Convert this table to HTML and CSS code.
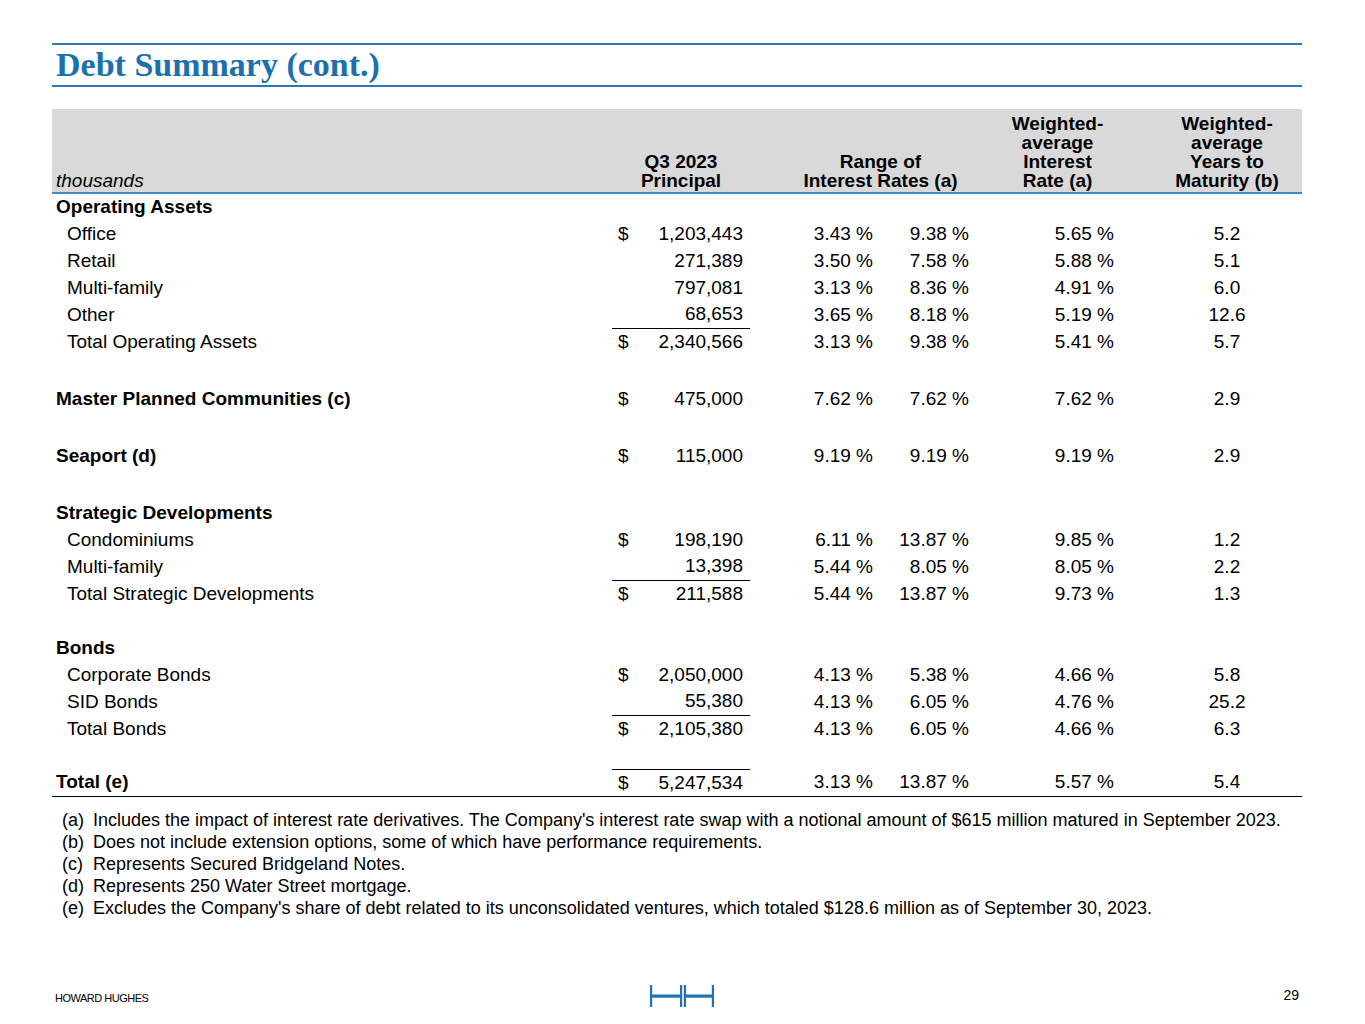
FILE: index.html
```html
<!DOCTYPE html>
<html>
<head>
<meta charset="utf-8">
<link rel="stylesheet" href="styles.css">
</head>
<body>
<div class="page">
  <header class="title-bar">
    <h1>Debt Summary (cont.)</h1>
  </header>

  <table class="debt">
    <colgroup>
      <col class="c-label"><col class="c-amt"><col class="c-r1"><col class="c-r2"><col class="c-wa"><col class="c-yr">
    </colgroup>
    <thead>
      <tr>
        <th class="h-label">thousands</th>
        <th class="h-amt">Q3 2023<br>Principal</th>
        <th class="h-range" colspan="2">Range of<br>Interest Rates (a)</th>
        <th class="h-wa">Weighted-<br>average<br>Interest<br>Rate (a)</th>
        <th class="h-yr">Weighted-<br>average<br>Years to<br>Maturity (b)</th>
      </tr>
    </thead>
    <tbody>
      <tr><td class="lbl sec" colspan="6">Operating Assets</td></tr>
      <tr><td class="lbl item">Office</td><td class="amt"><span class="cur">$</span>1,203,443</td><td class="r1">3.43 %</td><td class="r2">9.38 %</td><td class="wa">5.65 %</td><td class="yr">5.2</td></tr>
      <tr><td class="lbl item">Retail</td><td class="amt">271,389</td><td class="r1">3.50 %</td><td class="r2">7.58 %</td><td class="wa">5.88 %</td><td class="yr">5.1</td></tr>
      <tr><td class="lbl item">Multi-family</td><td class="amt">797,081</td><td class="r1">3.13 %</td><td class="r2">8.36 %</td><td class="wa">4.91 %</td><td class="yr">6.0</td></tr>
      <tr><td class="lbl item">Other</td><td class="amt under">68,653</td><td class="r1">3.65 %</td><td class="r2">8.18 %</td><td class="wa">5.19 %</td><td class="yr">12.6</td></tr>
      <tr><td class="lbl item">Total Operating Assets</td><td class="amt"><span class="cur">$</span>2,340,566</td><td class="r1">3.13 %</td><td class="r2">9.38 %</td><td class="wa">5.41 %</td><td class="yr">5.7</td></tr>
      <tr class="gap-l"><td colspan="6"></td></tr>
      <tr><td class="lbl sec">Master Planned Communities (c)</td><td class="amt"><span class="cur">$</span>475,000</td><td class="r1">7.62 %</td><td class="r2">7.62 %</td><td class="wa">7.62 %</td><td class="yr">2.9</td></tr>
      <tr class="gap-l"><td colspan="6"></td></tr>
      <tr><td class="lbl sec">Seaport (d)</td><td class="amt"><span class="cur">$</span>115,000</td><td class="r1">9.19 %</td><td class="r2">9.19 %</td><td class="wa">9.19 %</td><td class="yr">2.9</td></tr>
      <tr class="gap-l"><td colspan="6"></td></tr>
      <tr><td class="lbl sec" colspan="6">Strategic Developments</td></tr>
      <tr><td class="lbl item">Condominiums</td><td class="amt"><span class="cur">$</span>198,190</td><td class="r1">6.11 %</td><td class="r2">13.87 %</td><td class="wa">9.85 %</td><td class="yr">1.2</td></tr>
      <tr><td class="lbl item">Multi-family</td><td class="amt under">13,398</td><td class="r1">5.44 %</td><td class="r2">8.05 %</td><td class="wa">8.05 %</td><td class="yr">2.2</td></tr>
      <tr><td class="lbl item">Total Strategic Developments</td><td class="amt"><span class="cur">$</span>211,588</td><td class="r1">5.44 %</td><td class="r2">13.87 %</td><td class="wa">9.73 %</td><td class="yr">1.3</td></tr>
      <tr class="gap-s"><td colspan="6"></td></tr>
      <tr><td class="lbl sec" colspan="6">Bonds</td></tr>
      <tr><td class="lbl item">Corporate Bonds</td><td class="amt"><span class="cur">$</span>2,050,000</td><td class="r1">4.13 %</td><td class="r2">5.38 %</td><td class="wa">4.66 %</td><td class="yr">5.8</td></tr>
      <tr><td class="lbl item">SID Bonds</td><td class="amt under">55,380</td><td class="r1">4.13 %</td><td class="r2">6.05 %</td><td class="wa">4.76 %</td><td class="yr">25.2</td></tr>
      <tr><td class="lbl item">Total Bonds</td><td class="amt"><span class="cur">$</span>2,105,380</td><td class="r1">4.13 %</td><td class="r2">6.05 %</td><td class="wa">4.66 %</td><td class="yr">6.3</td></tr>
      <tr class="gap-s"><td colspan="6"></td></tr>
      <tr class="grand"><td class="lbl sec">Total (e)</td><td class="amt over"><span class="cur">$</span>5,247,534</td><td class="r1">3.13 %</td><td class="r2">13.87 %</td><td class="wa">5.57 %</td><td class="yr">5.4</td></tr>
    </tbody>
  </table>

  <ol class="notes">
    <li><span class="mk">(a)</span><span>Includes the impact of interest rate derivatives. The Company's interest rate swap with a notional amount of $615 million matured in September 2023.</span></li>
    <li><span class="mk">(b)</span><span>Does not include extension options, some of which have performance requirements.</span></li>
    <li><span class="mk">(c)</span><span>Represents Secured Bridgeland Notes.</span></li>
    <li><span class="mk">(d)</span><span>Represents 250 Water Street mortgage.</span></li>
    <li><span class="mk">(e)</span><span>Excludes the Company's share of debt related to its unconsolidated ventures, which totaled $128.6 million as of September 30, 2023.</span></li>
  </ol>

  <footer class="footer">
    <span class="brand">HOWARD HUGHES</span>
    <svg class="logo" width="64" height="22" viewBox="0 0 64 22" aria-hidden="true">
      <g fill="#1f73b0">
        <rect x="0" y="0" width="2.2" height="22"/>
        <rect x="30" y="0" width="2.2" height="22"/>
        <rect x="0" y="9.5" width="32" height="3.2"/>
        <rect x="33.8" y="0" width="2.2" height="22"/>
        <rect x="61.8" y="0" width="2.2" height="22"/>
        <rect x="33.8" y="9.5" width="30" height="3.2"/>
      </g>
    </svg>
    <span class="pg">29</span>
  </footer>
</div>
</body>
</html>
```

FILE: styles.css
```css
* { box-sizing: border-box; }
html, body { margin: 0; padding: 0; background: #fff; }
body {
  font-family: "Liberation Sans", Arial, sans-serif;
  color: #000;
}
.page {
  width: 1365px;
  height: 1024px;
  padding: 43px 63px 0 52px;
  display: flex;
  flex-direction: column;
}
.title-bar {
  border-top: 2px solid #2a78b4;
  border-bottom: 2px solid #2a78b4;
  height: 44px;
  padding-left: 4px;
  margin-bottom: 22px;
}
.title-bar h1 {
  margin: 0;
  font-family: "Liberation Serif", "Times New Roman", serif;
  font-weight: bold;
  font-size: 34px;
  line-height: 40px;
  color: #1d70ae;
}
.debt {
  width: 1250px;
  border-collapse: collapse;
  table-layout: fixed;
  font-size: 19px;
}
.c-label { width: 560px; }
.c-amt { width: 138px; }
.c-r1 { width: 130px; }
.c-r2 { width: 95px; }
.c-wa { width: 145px; }
.c-yr { width: 182px; }

.debt thead th {
  background: #d9d9d9;
  font-size: 19px;
  line-height: 19px;
  font-weight: bold;
  vertical-align: bottom;
  padding: 5px 0 2px;
  border-bottom: 2px solid #3f8bc6;
  text-align: center;
}
.debt thead th.h-label {
  text-align: left;
  font-weight: normal;
  font-style: italic;
  padding-left: 4px;
}
.debt thead th.h-range { padding-left: 36px; }
.debt thead th.h-wa { padding-left: 20px; }
.debt thead th.h-yr { padding-left: 32px; }

.debt tbody td {
  height: 27px;
  padding: 0;
  line-height: 20px;
  white-space: nowrap;
  vertical-align: middle;
}
.debt .lbl.sec { font-weight: bold; padding-left: 4px; }
.debt .lbl.item { padding-left: 15px; }
.debt .amt { text-align: right; padding: 0 7px 0 6px; }
.debt .amt .cur { float: left; }
.debt .amt.under { border-bottom: 1px solid #000; }
.debt .amt.over { border-top: 1px solid #000; }
.debt .r1 { text-align: right; padding-right: 7px; }
.debt .r2 { text-align: right; padding-right: 6px; }
.debt .wa { text-align: right; padding-right: 6px; }
.debt .yr { text-align: center; padding-left: 32px; }
.debt tr.gap-l td { height: 30px; }
.debt tr.gap-s td { height: 27px; }
.debt tr.grand td { border-bottom: 1px solid #000; }

.notes {
  list-style: none;
  margin: 12px 0 0;
  padding: 0 0 0 10px;
  font-size: 18px;
  line-height: 22px;
}
.notes li { display: flex; }
.notes .mk { width: 31px; flex: none; }

.footer {
  margin-top: auto;
  margin-bottom: 17px;
  height: 22px;
  display: flex;
  align-items: center;
  justify-content: space-between;
  padding-left: 3px;
}
.footer .brand { font-size: 11px; letter-spacing: -0.5px; width: 120px; margin-top: 4px; }
.footer .logo { display: block; margin-left: 475px; }
.footer .pg { font-size: 14px; margin-left: auto; margin-right: 3px; margin-top: -2px; }
```
